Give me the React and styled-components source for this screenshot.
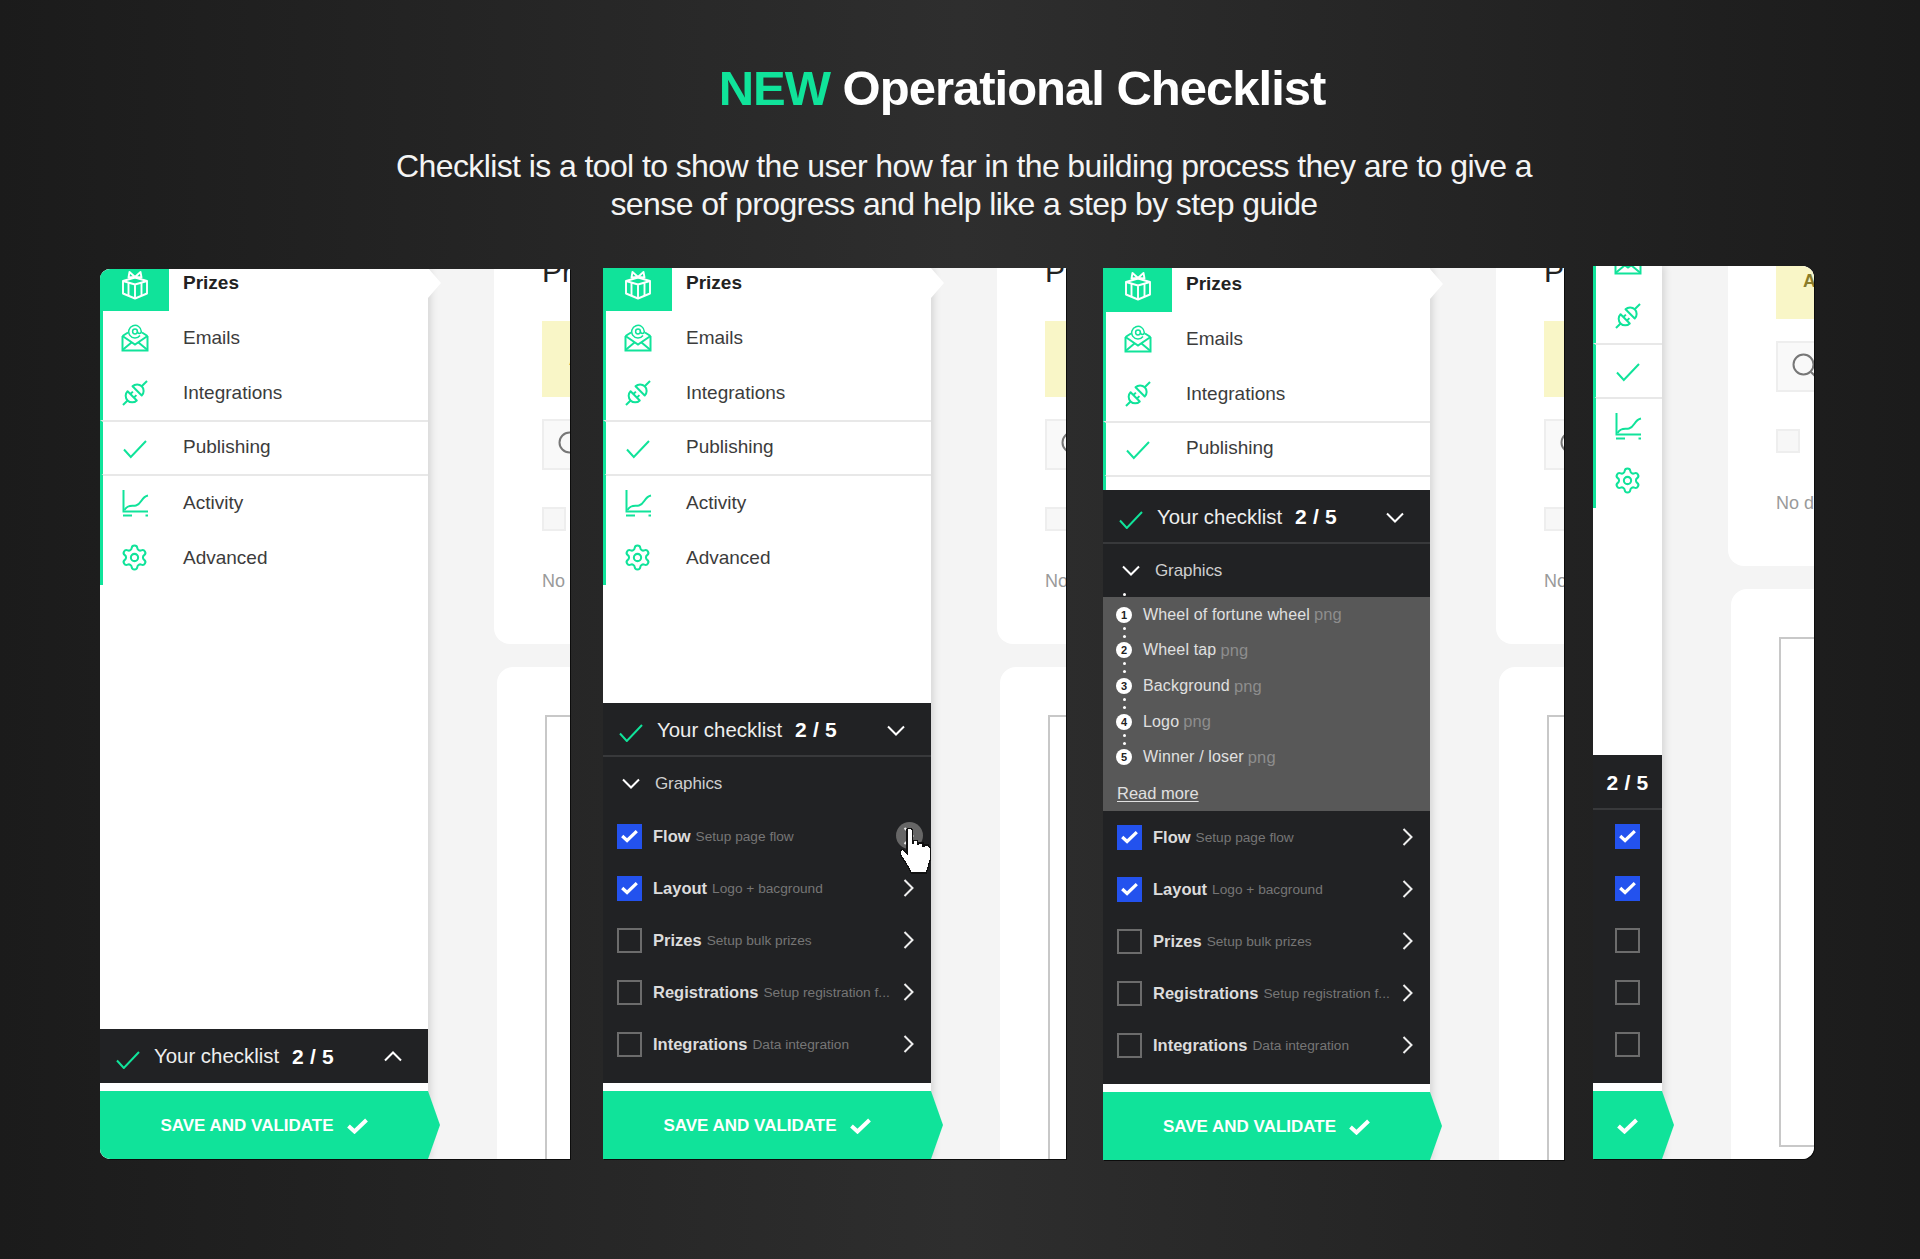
import React from "react";
import styled, { createGlobalStyle } from "styled-components";
import { Settings } from "lucide-react";

const GREEN = "#10e39a";
const DARK = "#212224";

const GlobalStyle = createGlobalStyle`
  html, body {
    margin: 0;
    padding: 0;
    background: #1b1b1b;
  }
  * {
    box-sizing: border-box;
  }
`;

const Page = styled.div`
  width: 1920px;
  height: 1259px;
  overflow: hidden;
  padding-top: 60px;
  background: linear-gradient(90deg, #1b1b1b 0%, #2e2e2e 50%, #1b1b1b 100%);
  font-family: "Liberation Sans", Arial, sans-serif;
`;

const Title = styled.h1`
  margin: 0;
  padding-left: 124px;
  text-align: center;
  font-size: 49px;
  line-height: 56px;
  font-weight: 700;
  letter-spacing: -1px;
  color: #fff;
`;

const New = styled.span`
  color: ${GREEN};
`;

const Subtitle = styled.p`
  margin: 31px 0 0;
  padding-left: 8px;
  text-align: center;
  font-size: 32px;
  line-height: 38px;
  letter-spacing: -0.6px;
  color: #f4f4f4;
`;

const Panels = styled.div`
  display: flex;
  align-items: flex-start;
  margin-top: 43px;
  padding-left: 100px;
`;

const Panel = styled.section`
  display: flex;
  flex: none;
  overflow: hidden;
  width: ${({ $width }) => $width}px;
  height: ${({ $height }) => $height}px;
  margin-top: ${({ $top }) => $top}px;
  margin-left: ${({ $lead }) => $lead}px;
  border-radius: ${({ $radius }) => $radius};
  background: #f4f4f4;
  box-shadow: 1px 1px 0 #0c0c0c;
`;

const Sidebar = styled.aside`
  position: relative;
  z-index: 1;
  flex: none;
  display: flex;
  flex-direction: column;
  width: ${({ $width }) => $width}px;
  background: #fff;
  box-shadow: 3px 0 7px rgba(0, 0, 0, 0.12);
`;

const Nav = styled.nav`
  flex: 1;
  min-height: 0;
  margin-top: ${({ $offset }) => $offset}px;
`;

const NavRow = styled.div`
  position: relative;
  display: flex;
  align-items: center;
  height: ${({ $ruled }) => ($ruled ? "56px" : "54.8px")};
  margin-bottom: ${({ $ruled }) => ($ruled ? "-1px" : "0")};
  padding-bottom: ${({ $ruled }) => ($ruled ? "2px" : "0")};
  border-left: 3px solid ${GREEN};
  border-top: ${({ $ruled }) => ($ruled ? "2px solid #e8e8e8" : "none")};
  border-bottom: ${({ $ruled }) => ($ruled ? "2px solid #e8e8e8" : "none")};
  font-size: 19px;
  font-weight: ${({ $active }) => ($active ? 700 : 400)};
  color: ${({ $active }) => ($active ? "#222" : "#3c3c3c")};

  ${({ $active, $collapsed }) =>
    $active && !$collapsed
      ? `&::after {
    content: "";
    position: absolute;
    right: -13px;
    top: 12px;
    width: 13px;
    height: 30px;
    background: #fff;
    clip-path: polygon(0 0, 100% 50%, 0 100%);
  }`
      : ""}
`;

const NavIcon = styled.div`
  flex: none;
  align-self: stretch;
  display: flex;
  align-items: center;
  justify-content: center;
  width: ${({ $active }) => ($active ? "69px" : "66px")};
  margin-left: ${({ $active }) => ($active ? "-3px" : "0")};
  padding-right: ${({ $active }) => ($active ? "0" : "3px")};
  background: ${({ $active }) => ($active ? GREEN : "transparent")};
  color: ${({ $active }) => ($active ? "#fff" : GREEN)};

  svg {
    display: block;
  }
`;

const NavLabel = styled.span`
  margin-left: 14px;
`;

const Checklist = styled.div`
  position: relative;
  z-index: 1;
  flex: none;
  background: ${DARK};
  color: #fff;
  padding-bottom: ${({ $pad }) => $pad}px;
`;

const ChecklistHead = styled.div`
  display: flex;
  align-items: center;
  justify-content: ${({ $collapsed }) => ($collapsed ? "center" : "flex-start")};
  height: ${({ $collapsed }) => ($collapsed ? 55 : 54)}px;
  padding-left: ${({ $collapsed }) => ($collapsed ? 0 : 16)}px;
  padding-top: ${({ $open }) => ($open ? 2 : 1)}px;
  border-bottom: ${({ $open }) => ($open ? "2px solid #38393b" : "none")};
  font-size: 20.4px;
`;

const HeadCheck = styled.svg`
  flex: none;
  width: 24px;
  height: 18px;
  margin-top: 6px;
  margin-right: 14px;
  fill: none;
  stroke: ${GREEN};
  stroke-width: 2;
`;

const HeadLabel = styled.span`
  color: #eee;
`;

const Count = styled.b`
  margin-left: ${({ $collapsed }) => ($collapsed ? 0 : 13)}px;
  font-size: 21px;
  font-weight: 700;
  letter-spacing: 0.2px;
`;

const Caret = styled.svg`
  flex: none;
  width: 18px;
  height: 11px;
  margin-left: ${({ $auto }) => ($auto ? "auto" : "0")};
  margin-right: ${({ $auto }) => ($auto ? "26px" : "0")};
  fill: none;
  stroke: #fff;
  stroke-width: 2;
`;

const Section = styled.div`
  display: flex;
  align-items: center;
  gap: 15px;
  height: 53px;
  padding-left: 19px;
  font-size: 17px;
  letter-spacing: -0.1px;
  color: #cfcfcf;
`;

const Steps = styled.div`
  background: #585858;
  padding-left: 14px;
`;

const Step = styled.div`
  position: relative;
  display: flex;
  align-items: center;
  height: 35.6px;
  font-size: 16px;
  letter-spacing: 0.15px;
  color: #e0e0e0;
`;

const StepNumber = styled.span`
  position: relative;
  flex: none;
  display: flex;
  align-items: center;
  justify-content: center;
  width: 16px;
  height: 16px;
  margin-left: -1px;
  margin-right: 11px;
  border-radius: 50%;
  background: #fff;
  color: #222;
  font-size: 11px;
  font-weight: 700;
  letter-spacing: 0;

  &::before,
  &::after {
    content: "";
    position: absolute;
    left: 6.5px;
    width: 3px;
    height: 3px;
    border-radius: 50%;
    background: #fff;
  }
  &::before {
    top: -14px;
    opacity: ${({ $first }) => ($first ? 1 : 0)};
  }
  &::after {
    top: 20px;
    box-shadow: 0 8px 0 #fff;
    opacity: ${({ $last }) => ($last ? 0 : 1)};
  }
`;

const FileType = styled.span`
  margin-left: 4px;
  font-size: 16.5px;
  color: #8d8d8d;
`;

const ReadMore = styled.a`
  display: flex;
  align-items: center;
  height: 36px;
  font-size: 16.5px;
  color: #e0e0e0;
  text-decoration: underline;
  text-underline-offset: 2px;
`;

const Task = styled.div`
  position: relative;
  display: flex;
  align-items: center;
  justify-content: ${({ $collapsed }) => ($collapsed ? "center" : "flex-start")};
  height: 52px;
  padding-left: ${({ $collapsed }) => ($collapsed ? 0 : 14)}px;
`;

const Box = styled.span`
  flex: none;
  display: flex;
  align-items: center;
  justify-content: center;
  width: 25px;
  height: 25px;
  background: ${({ $done }) => ($done ? "#2352ee" : "transparent")};
  border: ${({ $done }) => ($done ? "none" : "2px solid #6c6c6c")};
`;

const TaskName = styled.b`
  flex: none;
  margin-left: 11px;
  font-size: 16.5px;
  font-weight: 700;
  color: #dcdcdc;
`;

const TaskHint = styled.span`
  margin-left: 5px;
  font-size: 13.7px;
  white-space: nowrap;
  color: #767676;
`;

const TaskCaret = styled.svg`
  position: absolute;
  right: 17px;
  top: 17px;
  width: 11px;
  height: 18px;
  fill: none;
  stroke: #eee;
  stroke-width: 2;
`;

const HoverDot = styled.span`
  position: absolute;
  right: 8px;
  top: 12px;
  width: 27px;
  height: 27px;
  border-radius: 50%;
  background: #666;
`;

const Hand = styled.svg`
  position: absolute;
  z-index: 3;
  left: 295px;
  top: 18px;
  width: 37px;
  height: 47px;
  fill: #fff;
  stroke: #111;
  stroke-width: 1.2;
`;

const Gap = styled.div`
  flex: none;
  height: 8px;
`;

const Save = styled.div`
  flex: none;
  display: flex;
  align-items: center;
  justify-content: center;
  gap: 13px;
  width: calc(100% + 12px);
  height: 68px;
  padding-right: 12px;
  padding-top: 1px;
  background: ${GREEN};
  clip-path: polygon(0 0, calc(100% - 12px) 0, 100% 50%, calc(100% - 12px) 100%, 0 100%);
  font-size: 17px;
  font-weight: 700;
  color: #fff;
`;

const Canvas = styled.div`
  flex: 1;
  min-width: 0;
  overflow: hidden;
  padding-left: 66px;
`;

const Cards = styled.div`
  width: 620px;
  margin-top: ${({ $scroll }) => -20 - $scroll}px;
`;

const Card = styled.div`
  padding: 0 0 51px 48px;
  background: #fff;
  border-radius: 0 0 0 16px;
`;

const CardTitle = styled.div`
  height: 46px;
  margin-bottom: 26px;
  font-size: 30px;
  line-height: 46px;
  color: #222;
`;

const Notice = styled.div`
  display: flex;
  align-items: center;
  height: 76px;
  padding-left: 27px;
  background: #f9f6c7;
  font-size: 18px;
  font-weight: 700;
  color: #8b7d2a;
`;

const Search = styled.div`
  display: flex;
  align-items: center;
  height: 51px;
  margin-top: 22px;
  padding-left: 14px;
  background: #f9f9f9;
  border: 2px solid #eeeeee;

  svg {
    display: block;
  }
`;

const EmptyBox = styled.div`
  width: 24px;
  height: 24px;
  margin-top: 37px;
  background: #f7f7f7;
  border: 2px solid #eeeeee;
`;

const NoData = styled.div`
  margin-top: 38px;
  font-size: 18px;
  line-height: 24px;
  color: #9a9a9a;
`;

const LowerCard = styled.div`
  margin: 23px 0 0 3px;
  padding: 48px 0 48px 48px;
  background: #fff;
  border-radius: 16px 0 0 16px;
`;

const Frame = styled.div`
  height: 510px;
  background: #fff;
  border: 2px solid #c8c8c8;
`;

const CheckThin = () => (
  <svg width="27" height="27" viewBox="0 0 27 27" fill="none" stroke="currentColor" strokeWidth="2">
    <path d="M3 15.5 L9.8 23 L25 7" />
  </svg>
);

const Gift = () => (
  <svg width="28" height="34" viewBox="0 0 28 34" fill="none" stroke="currentColor" strokeWidth="1.9" strokeLinejoin="round">
    <path d="M2 15 L14 11.5 L26 15 V27.5 L14 32.5 L2 27.5 Z" />
    <path d="M2 15 L14 18.5 L26 15 M14 18.5 V32.5 M7.5 17 V30 M20.5 17 V30" />
    <path d="M14 11 L8.5 6 L7.5 11.5 Z M14 11 L19.5 6 L20.5 11.5 Z" />
  </svg>
);

const Mail = () => (
  <svg width="28" height="28" viewBox="0 0 28 28" fill="none" stroke="currentColor" strokeWidth="2">
    <path d="M1.5 12 L7 8.5 M26.5 12 L21 8.5 M1.5 12 V26.5 H26.5 V12" />
    <path d="M1.5 12 L14 20.5 L26.5 12 M1.5 26 L10.5 18.5 M26.5 26 L17.5 18.5" />
    <circle cx="14" cy="7.5" r="2.4" strokeWidth="1.5" />
    <path d="M19 11.5 A6.3 6.3 0 1 1 20.3 7.5 C20.3 10 16.5 10 16.4 7.5" strokeWidth="1.5" />
  </svg>
);

const Plug = () => (
  <svg width="28" height="28" viewBox="0 0 28 28" fill="none" stroke="currentColor" strokeWidth="2" strokeLinejoin="round">
    <g transform="rotate(-45 14 14)">
      <path d="M-3 14 H3.5" />
      <path d="M10 7.5 A6.5 6.5 0 0 0 10 20.5 Z" />
      <path d="M10 11.5 H13.5 M10 16.5 H13.5" />
      <path d="M17 7.5 A6.5 6.5 0 0 1 17 20.5 Z" />
      <path d="M23.5 14 H31" />
    </g>
  </svg>
);

const Chart = () => (
  <svg width="28" height="28" viewBox="0 0 28 28" fill="none" stroke="currentColor" strokeWidth="2">
    <path d="M2.5 1 V22.5 H27" />
    <path d="M3.5 21 C7 15 11 17.5 15 16.5 C21 15 20 8 27 6.5" />
    <path d="M2 26.5 H11 M24.5 26.5 H27" />
  </svg>
);

const Gear = () => <Settings size={29} strokeWidth={1.7} />;

const Tick = ({ width = 17, height = 14 }) => (
  <svg width={width} height={height} viewBox="0 0 21 16" fill="none" stroke="#fff" strokeWidth="4">
    <path d="M1.5 8 L7.5 13.5 L19.5 2" />
  </svg>
);

const navItems = [
  { name: "Prizes", icon: Gift, active: true },
  { name: "Emails", icon: Mail },
  { name: "Integrations", icon: Plug },
  { name: "Publishing", icon: CheckThin, ruled: true },
  { name: "Activity", icon: Chart },
  { name: "Advanced", icon: Gear },
];

const tasks = [
  { name: "Flow", hint: "Setup page flow", done: true },
  { name: "Layout", hint: "Logo + bacground", done: true },
  { name: "Prizes", hint: "Setup bulk prizes" },
  { name: "Registrations", hint: "Setup registration f..." },
  { name: "Integrations", hint: "Data integration" },
];

const steps = ["Wheel of fortune wheel", "Wheel tap", "Background", "Logo", "Winner / loser"];

const panels = [
  { width: 470, height: 890, top: 3, lead: 0, side: 328, nav: -13, scroll: 0, state: "closed", radius: "10px 0 0 10px" },
  { width: 463, height: 891, top: 2, lead: 33, side: 328, nav: -12, scroll: -1, state: "open", radius: "0" },
  { width: 461, height: 892, top: 2, lead: 37, side: 327, nav: -11, scroll: -1, state: "steps", radius: "0" },
  { width: 221, height: 893, top: 0, lead: 29, side: 69, nav: -87, scroll: 75, state: "collapsed", radius: "0 12px 12px 0" },
];

function Down() {
  return <path d="M1 1.5 L9 9.5 L17 1.5" />;
}

function SideNav({ offset, collapsed, covered }) {
  // with the step list open the checklist covers the last two rows
  const items = covered ? navItems.slice(0, 4) : navItems;
  return (
    <Nav $offset={offset}>
      {items.map((item) => {
        const Icon = item.icon;
        return (
          <NavRow key={item.name} $active={item.active} $ruled={item.ruled} $collapsed={collapsed}>
            <NavIcon $active={item.active}>
              <Icon />
            </NavIcon>
            {!collapsed && <NavLabel>{item.name}</NavLabel>}
          </NavRow>
        );
      })}
      {covered && <NavRow />}
    </Nav>
  );
}

function TaskRow({ task, collapsed, hover }) {
  return (
    <Task $collapsed={collapsed}>
      <Box $done={task.done}>{task.done && <Tick />}</Box>
      {!collapsed && (
        <>
          <TaskName>{task.name}</TaskName>
          <TaskHint>{task.hint}</TaskHint>
          {hover && <HoverDot />}
          <TaskCaret viewBox="0 0 11 18">
            <path d="M1.5 1 L9.5 9 L1.5 17" />
          </TaskCaret>
          {hover && (
            <Hand viewBox="0 0 34 44" shapeRendering="crispEdges">
              <path d="M8 2 L9 0 H12 L13 2 V14 H14 V12 H18 V15 H19 V14 H23 V17 H24 V16 H28 L30 19 V29 L28 36 L26 42 H12 L9 36 L2 25 V21 L4 20 L8 24 Z" />
            </Hand>
          )}
        </>
      )}
    </Task>
  );
}

function ChecklistBlock({ state }) {
  const collapsed = state === "collapsed";
  const closed = state === "closed";
  return (
    <Checklist $pad={closed ? 0 : 13}>
      <ChecklistHead $open={!closed} $collapsed={collapsed}>
        {!collapsed && (
          <>
            <HeadCheck viewBox="0 0 24 18">
              <path d="M1 9.5 L7.8 17 L23 1" />
            </HeadCheck>
            <HeadLabel>Your checklist</HeadLabel>
          </>
        )}
        <Count $collapsed={collapsed}>2 / 5</Count>
        {!collapsed && (
          <Caret $auto viewBox="0 0 18 11">
            {closed ? <path d="M1 9.5 L9 1.5 L17 9.5" /> : <Down />}
          </Caret>
        )}
      </ChecklistHead>
      {(state === "open" || state === "steps") && (
        <Section>
          <Caret viewBox="0 0 18 11">
            <Down />
          </Caret>
          Graphics
        </Section>
      )}
      {state === "steps" && (
        <Steps>
          {steps.map((step, index) => (
            <Step key={step}>
              <StepNumber $first={index === 0} $last={index === steps.length - 1}>
                {index + 1}
              </StepNumber>
              {step}
              <FileType>png</FileType>
            </Step>
          ))}
          <ReadMore>Read more</ReadMore>
        </Steps>
      )}
      {!closed &&
        tasks.map((task, index) => (
          <TaskRow key={task.name} task={task} collapsed={collapsed} hover={state === "open" && index === 0} />
        ))}
    </Checklist>
  );
}

function ContentCards({ scroll }) {
  return (
    <Cards $scroll={scroll}>
      <Card>
        <CardTitle>Prizes</CardTitle>
        <Notice>A</Notice>
        <Search>
          <svg width="28" height="28" viewBox="0 0 28 28" fill="none" stroke="#777" strokeWidth="2">
            <circle cx="11.5" cy="11.5" r="10" />
            <path d="M19 19 L26 26" />
          </svg>
        </Search>
        <EmptyBox />
        <NoData>No data</NoData>
      </Card>
      <LowerCard>
        <Frame />
      </LowerCard>
    </Cards>
  );
}

export default function App() {
  return (
    <Page>
      <GlobalStyle />
      <Title>
        <New>NEW</New> Operational Checklist
      </Title>
      <Subtitle>
        Checklist is a tool to show the user how far in the building process they are to give a
        <br />
        sense of progress and help like a step by step guide
      </Subtitle>
      <Panels>
        {panels.map((panel) => {
          const collapsed = panel.state === "collapsed";
          return (
            <Panel
              key={panel.lead}
              $width={panel.width}
              $height={panel.height}
              $top={panel.top}
              $lead={panel.lead}
              $radius={panel.radius}
            >
              <Sidebar $width={panel.side}>
                <SideNav offset={panel.nav} collapsed={collapsed} covered={panel.state === "steps"} />
                <ChecklistBlock state={panel.state} />
                <Gap />
                <Save>
                  {!collapsed && "SAVE AND VALIDATE"}
                  <Tick width={21} height={16} />
                </Save>
              </Sidebar>
              <Canvas>
                <ContentCards scroll={panel.scroll} />
              </Canvas>
            </Panel>
          );
        })}
      </Panels>
    </Page>
  );
}
